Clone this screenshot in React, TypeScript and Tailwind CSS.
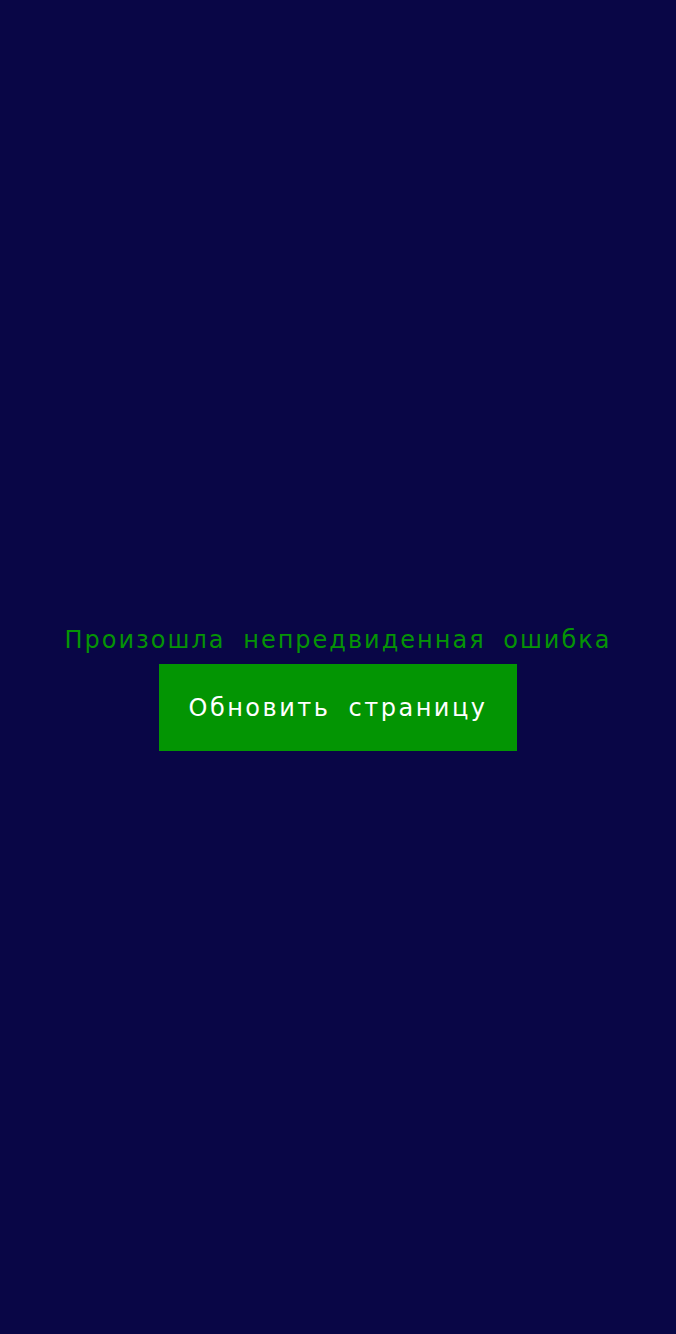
export default function App() {
  return (
    <main className="min-h-screen bg-[#090646] flex flex-col items-center justify-center pt-[43px] font-['DejaVu_Sans',sans-serif] text-[24px] [word-spacing:8px]">
      {/* error message */}
      <p className="text-[#059405] leading-[28px] tracking-[2px] whitespace-nowrap">Произошла непредвиденная ошибка</p>
      <button className="mt-[10px] bg-[#039503] text-white px-[29px] h-[87px] leading-[28px] tracking-[2.5px] [word-spacing:8px] whitespace-nowrap">
        Обновить страницу
      </button>
    </main>
  );
}
